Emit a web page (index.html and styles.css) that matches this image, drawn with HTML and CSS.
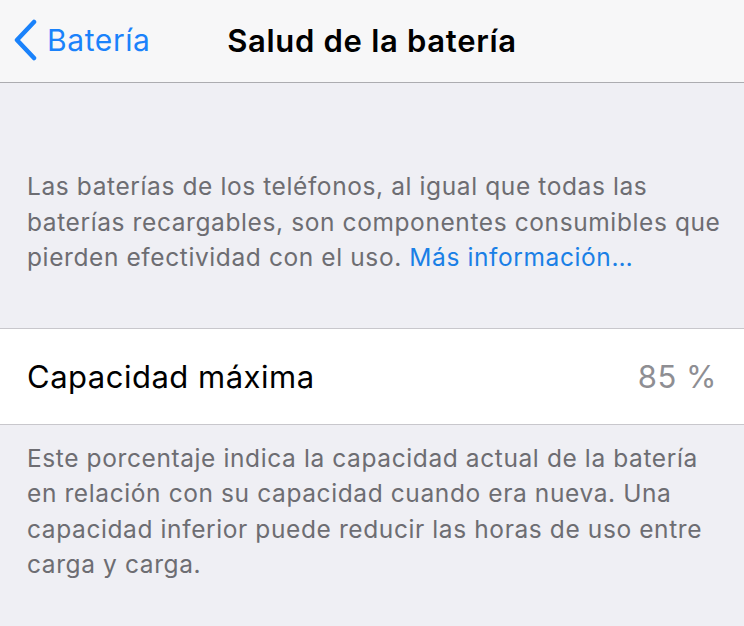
FILE: index.html
```html
<!DOCTYPE html>
<html lang="es">

<head>
    <meta charset="UTF-8">
    <meta name="viewport" content="width=device-width, initial-scale=1.0">
    <title>Salud de la batería</title>
    <link rel="stylesheet" href="styles.css">
</head>

<body>
    <header class="navbar">
        <a href="javascript:;" class="back">
            <svg class="chevron" width="26" height="42" viewBox="0 0 26 42">
                <path d="M22 3 L5 21 L22 39" fill="none" stroke="#1a82fb" stroke-width="4.5" stroke-linecap="round" stroke-linejoin="round" />
            </svg>
            <span>Batería</span>
        </a>
        <h1 class="title">Salud de la batería</h1>
        <div></div>
    </header>

    <main class="content">
        <p class="note note-top">
            Las baterías de los teléfonos, al igual que todas las baterías recargables, son componentes consumibles que pierden efectividad con el uso. <a href="javascript:;" class="link">Más información…</a>
        </p>

        <div class="row">
            <span class="label">Capacidad máxima</span>
            <span class="value">85 %</span>
        </div>

        <p class="note note-bottom">
            Este porcentaje indica la capacidad actual de la batería en relación con su capacidad cuando era nueva. Una capacidad inferior puede reducir las horas de uso entre carga y carga.
        </p>
    </main>
</body>

</html>
```

FILE: styles.css
```css
* {
    margin: 0;
    padding: 0;
}

body {
    background-color: #efeff4;
    font-family: Inter, Roboto, "Liberation Sans", sans-serif;
    color: #000;
}

.navbar {
    height: 82px;
    background-color: #f7f7f8;
    border-bottom: 1px solid #acacb0;
    display: grid;
    grid-template-columns: 1fr auto 1fr;
    align-items: center;
}

.navbar .back {
    display: flex;
    align-items: center;
    gap: 9px;
    padding-left: 12px;
    color: #1a82fb;
    text-decoration: none;
    font-size: 30px;
    letter-spacing: 0.6px;
    padding-bottom: 2px;
}

.navbar .title {
    font-size: 31px;
    font-weight: 600;
    letter-spacing: 0.7px;
    padding-bottom: 2px;
}

.note {
    padding: 0 14px 0 27px;
    font-size: 24.5px;
    line-height: 35.5px;
    letter-spacing: 0.6px;
    color: #6d6d72;
}

.note-top {
    padding-top: 86px;
    padding-bottom: 52px;
}

.note .link {
    color: #1a7fe6;
    text-decoration: none;
}

.row {
    height: 95px;
    background-color: #fff;
    border-top: 1px solid #c8c7cc;
    border-bottom: 1px solid #c8c7cc;
    display: flex;
    align-items: center;
    justify-content: space-between;
    padding: 0 27px 0 27px;
    font-size: 31px;
    letter-spacing: 0.5px;
}

.row .value {
    color: #8e8e93;
}

.note-bottom {
    padding-top: 16px;
}
```
